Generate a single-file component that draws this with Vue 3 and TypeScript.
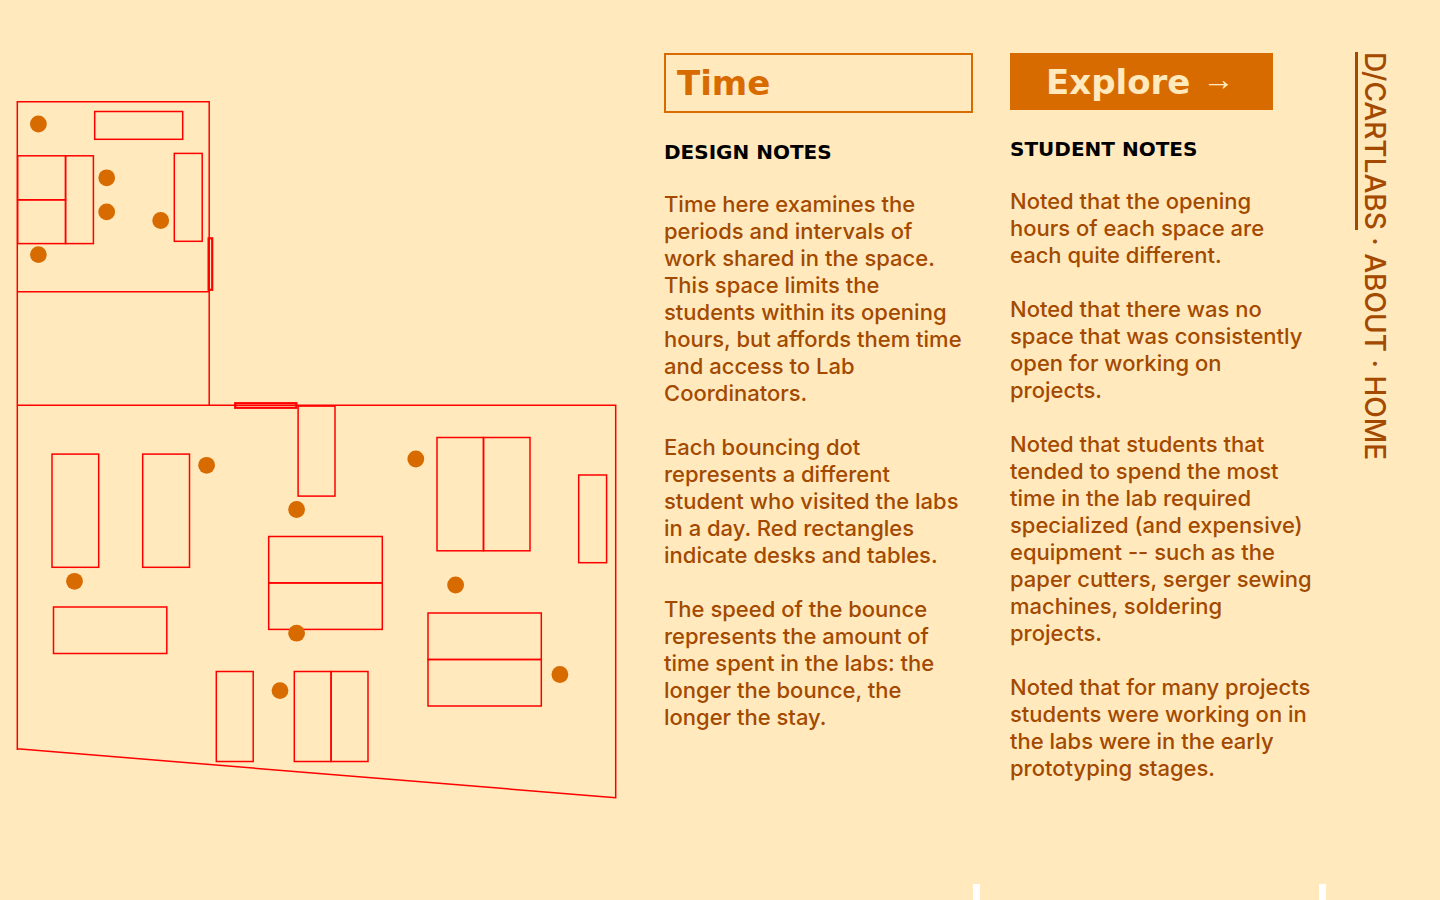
<script setup lang="ts">
interface Desk { x: number; y: number; w: number; h: number }
interface Dot { x: number; y: number }

const desks: Desk[] = [
  { x: 94.7, y: 111.5, w: 88, h: 27.8 },
  { x: 17.7, y: 155.8, w: 47.8, h: 44 },
  { x: 17.7, y: 199.8, w: 47.8, h: 43.8 },
  { x: 65.6, y: 155.8, w: 27.8, h: 87.8 },
  { x: 174.3, y: 153.4, w: 27.9, h: 87.9 },
  { x: 298.1, y: 406.1, w: 36.9, h: 90 },
  { x: 52, y: 454.1, w: 46.7, h: 113.2 },
  { x: 142.7, y: 454.1, w: 46.8, h: 113.2 },
  { x: 53.5, y: 607, w: 113.3, h: 46.5 },
  { x: 268.7, y: 536.5, w: 113.6, h: 46.4 },
  { x: 268.7, y: 582.9, w: 113.6, h: 46.5 },
  { x: 437, y: 437.5, w: 46.5, h: 113.3 },
  { x: 483.5, y: 437.5, w: 46.5, h: 113.3 },
  { x: 578.7, y: 475, w: 27.9, h: 87.7 },
  { x: 428, y: 613, w: 113.3, h: 46.5 },
  { x: 428, y: 659.5, w: 113.3, h: 46.5 },
  { x: 216.3, y: 671.5, w: 36.9, h: 90 },
  { x: 294.3, y: 671.5, w: 36.8, h: 90 },
  { x: 331.1, y: 671.5, w: 36.9, h: 90 },
]

const dots: Dot[] = [
  { x: 38.4, y: 124 },
  { x: 106.7, y: 177.8 },
  { x: 106.7, y: 211.9 },
  { x: 160.7, y: 220.5 },
  { x: 38.4, y: 254.6 },
  { x: 206.6, y: 465.3 },
  { x: 296.6, y: 509.5 },
  { x: 74.5, y: 581.3 },
  { x: 296.6, y: 633.2 },
  { x: 280, y: 690.6 },
  { x: 415.8, y: 459 },
  { x: 455.6, y: 585 },
  { x: 559.9, y: 674.5 },
]

const designNotes: string[] = [
  'Time here examines the\nperiods and intervals of\nwork shared in the space.\nThis space limits the\nstudents within its opening\nhours, but affords them time\nand access to Lab\nCoordinators.',
  'Each bouncing dot\nrepresents a different\nstudent who visited the labs\nin a day. Red rectangles\nindicate desks and tables.',
  'The speed of the bounce\nrepresents the amount of\ntime spent in the labs: the\nlonger the bounce, the\nlonger the stay.',
]

const studentNotes: string[] = [
  'Noted that the opening\nhours of each space are\neach quite different.',
  'Noted that there was no\nspace that was consistently\nopen for working on\nprojects.',
  'Noted that students that\ntended to spend the most\ntime in the lab required\nspecialized (and expensive)\nequipment -- such as the\npaper cutters, serger sewing\nmachines, soldering\nprojects.',
  'Noted that for many projects\nstudents were working on in\nthe labs were in the early\nprototyping stages.',
]
</script>

<template>
  <div class="page">
    <svg class="plan" viewBox="0 0 634 900" role="img" aria-label="Floor plan of the labs">
      <g class="walls">
        <path d="M17.3 750V101.8H209.2V405.2M17.3 291.8H209.2M17.3 405.2H615.7V798.4M17.3 748.8L615.7 797.7" />
        <rect v-for="(desk, i) in desks" :key="i" :x="desk.x" :y="desk.y" :width="desk.w" :height="desk.h" />
      </g>
      <g class="doors">
        <rect x="208.6" y="238.3" width="3.6" height="51.5" />
        <rect x="235.2" y="403.2" width="61.2" height="4.6" />
      </g>
      <circle v-for="(dot, i) in dots" :key="i" class="dot" :cx="dot.x" :cy="dot.y" r="8.4" />
    </svg>

    <main class="column">
      <h1 class="title">Time</h1>
      <h2>DESIGN NOTES</h2>
      <p v-for="(note, i) in designNotes" :key="i">{{ note }}</p>
      <div class="corner"></div>
    </main>

    <aside class="column">
      <button class="explore" type="button">Explore <span class="arrow">→</span></button>
      <h2>STUDENT NOTES</h2>
      <p v-for="(note, i) in studentNotes" :key="i">{{ note }}</p>
      <div class="corner"></div>
    </aside>

    <nav class="nav">
      <a class="current" href="#">D/CARTLABS</a>
      · <a href="#">ABOUT</a>
      · <a href="#">HOME</a>
    </nav>
  </div>
</template>

<style>
body {
  margin: 0;
  background: #ffe9bd;
}
</style>

<style scoped>
.page {
  display: grid;
  grid-template-columns: minmax(0, 1fr) 316px 316px 84px;
  column-gap: 30px;
  min-height: 100vh;
  background: #ffe9bd;
  color: #a34a00;
  font-family: Inter, "Liberation Sans", sans-serif;
  font-size: 22px;
  font-weight: 500;
  line-height: 27px;
}

.plan {
  display: block;
  width: 100%;
}

.walls,
.doors {
  fill: none;
  stroke: #ff0000;
  stroke-width: 1.5;
}

.doors {
  stroke-width: 2.2;
}

.dot {
  fill: #d76b00;
}

.column {
  display: flex;
  flex-direction: column;
  align-items: flex-start;
  padding-top: 53px;
}

.title,
.explore,
h2 {
  font-family: "DejaVu Sans", sans-serif;
  font-weight: 700;
}

.title {
  box-sizing: border-box;
  width: calc(100% - 7px);
  margin: 0 0 26px;
  padding: 8px 11px;
  border: 2px solid #d76b00;
  color: #d76b00;
  font-size: 34px;
  line-height: 40px;
}

.explore {
  margin: 0 0 26px;
  padding: 9px 39px 8px 36px;
  border: 0;
  background: #d76b00;
  color: #ffe9bd;
  font-size: 34px;
  line-height: 40px;
  white-space: nowrap;
  cursor: pointer;
}

.arrow {
  font-family: "Liberation Sans", sans-serif;
  font-size: 32px;
  line-height: 1px;
  vertical-align: 4px;
}

h2 {
  margin: 0 0 26px;
  color: #000;
  font-size: 20px;
  line-height: 26px;
}

p {
  margin: 0 0 27px;
  white-space: pre-line;
}

.corner {
  align-self: flex-end;
  width: 7px;
  height: 16px;
  margin-top: auto;
  background: #fff;
}

.nav {
  writing-mode: vertical-rl;
  justify-self: start;
  padding-top: 52px;
  font-size: 28px;
  line-height: 38px;
  white-space: nowrap;
}

.nav a {
  color: inherit;
  text-decoration: none;
}

.nav .current {
  border-left: 3px solid #a34a00;
}
</style>
